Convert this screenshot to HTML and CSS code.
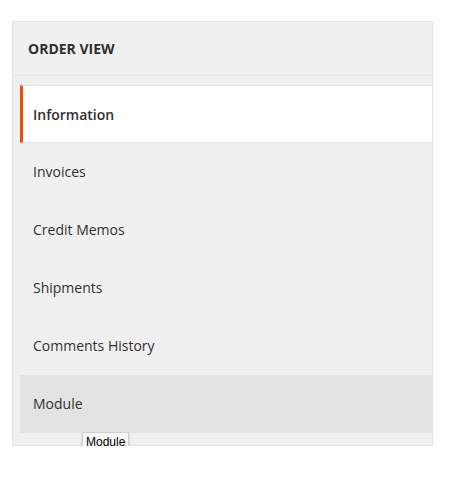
FILE: index.html
```html
<!DOCTYPE html>
<html>
<head>
<meta charset="utf-8">
<link rel="stylesheet" href="styles.css">
</head>
<body>
<div class="page-nav">
  <div class="nav-title">ORDER VIEW</div>
  <ul class="nav-items">
    <li class="nav-item active">Information</li>
    <li class="nav-item">Invoices</li>
    <li class="nav-item">Credit Memos</li>
    <li class="nav-item">Shipments</li>
    <li class="nav-item">Comments History</li>
    <li class="nav-item hover">Module<span class="tooltip">Module</span></li>
  </ul>
</div>
</body>
</html>
```

FILE: styles.css
```css
html, body {
  margin: 0;
  padding: 0;
  background: #ffffff;
}
body {
  font-family: "Open Sans", "Liberation Sans", sans-serif;
  color: #303030;
}
.page-nav {
  box-sizing: border-box;
  width: 421px;
  margin: 21px 0 0 12px;
  background: #f0f0f0;
  border: 1px solid #e3e3e3;
  padding-bottom: 12px;
}
.nav-title {
  height: 53px;
  border-bottom: 1px solid #e3e3e3;
  padding-left: 15px;
  display: flex;
  align-items: center;
  font-size: 14px;
  font-weight: 700;
}
.nav-items {
  list-style: none;
  margin: 9px 0 0 7px;
  padding: 0;
}
.nav-item {
  position: relative;
  box-sizing: border-box;
  height: 58px;
  display: flex;
  align-items: center;
  padding-left: 13px;
  padding-bottom: 2px;
  font-size: 14px;
}
.nav-item.active {
  background: #ffffff;
  border-top: 1px solid #e3e3e3;
  border-bottom: 1px solid #e3e3e3;
  border-left: 3px solid #eb5202;
  padding-left: 10px;
  padding-bottom: 0;
  font-weight: 600;
}
.nav-item.hover {
  background: #e3e3e3;
}
.tooltip {
  position: absolute;
  left: 62px;
  top: 57px;
  padding: 2px 3px 1px;
  background: #f8f8f8;
  border: 1px solid #d0d0d0;
  box-shadow: 0 1px 2px rgba(0,0,0,0.2);
  font-family: "Liberation Sans", Arial, sans-serif;
  font-size: 12px;
  line-height: 14px;
  color: #000;
  font-weight: 400;
  z-index: 2;
}
```
